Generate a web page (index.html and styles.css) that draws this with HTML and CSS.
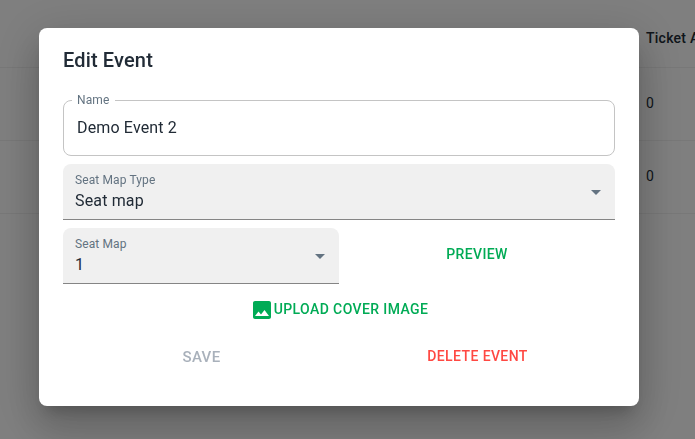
FILE: index.html
```html
<!DOCTYPE html>
<html lang="en">
<head>
<meta charset="utf-8">
<title>Edit Event</title>
<link rel="stylesheet" href="styles.css">
</head>
<body>
<div class="page">
  <div class="row row-head"><span class="cell">Ticket A</span></div>
  <div class="row"><span class="cell">0</span></div>
  <div class="row"><span class="cell">0</span></div>
</div>
<div class="backdrop">
  <div class="dialog" role="dialog">
    <h2 class="title">Edit Event</h2>
    <div class="content">
      <fieldset class="outlined">
        <legend class="legend">Name</legend>
        <div class="value">Demo Event 2</div>
      </fieldset>
      <div class="select">
        <div class="select-text">
          <span class="label">Seat Map Type</span>
          <span class="value">Seat map</span>
        </div>
        <svg class="arrow" viewBox="0 0 24 24"><path d="M7 10l5 5 5-5z"/></svg>
      </div>
      <div class="columns">
        <div class="select">
          <div class="select-text">
            <span class="label">Seat Map</span>
            <span class="value">1</span>
          </div>
          <svg class="arrow" viewBox="0 0 24 24"><path d="M7 10l5 5 5-5z"/></svg>
        </div>
        <button class="button preview">PREVIEW</button>
      </div>
      <button class="button upload">
        <svg class="image-icon" viewBox="0 0 24 24"><path d="M21 19V5c0-1.100-.9-2-2-2H5c-1.100 0-2 .9-2 2v14c0 1.100.9 2 2 2h14c1.100 0 2-.9 2-2zM8.500 13.500l2.500 3.010L14.500 12l4.500 6H5l3.500-4.500z"/></svg>
        <span class="upload-label">UPLOAD COVER IMAGE</span>
      </button>
      <div class="columns actions">
        <button class="button save" disabled>SAVE</button>
        <button class="button delete">DELETE EVENT</button>
      </div>
    </div>
  </div>
</div>
</body>
</html>
```
FILE: styles.css
```css
* { box-sizing: border-box; }

body {
  margin: 0;
  height: 439px;
  overflow: hidden;
  background: #fff;
  color: #212b36;
  font-family: Roboto, "Liberation Sans", sans-serif;
}

.page { padding-top: 9px; }

.row {
  display: flex;
  align-items: center;
  height: 73px;
  padding: 0 0 2px 646px;
  overflow: hidden;
  border-bottom: 1px solid #f1f1f1;
  font-size: 14px;
  letter-spacing: 0.15px;
  white-space: nowrap;
}

.row-head {
  height: 59px;
  padding-bottom: 0;
  font-weight: 500;
  letter-spacing: 0.24px;
}

.backdrop {
  position: fixed;
  inset: 0;
  padding: 28px 56px 33px 39px;
  background: rgba(0, 0, 0, 0.5);
}

.dialog {
  width: 600px;
  height: 378px;
  padding: 16px 24px;
  border-radius: 8px;
  background: #fff;
  box-shadow:
    0 11px 15px -7px rgba(0, 0, 0, 0.2),
    0 24px 38px 3px rgba(0, 0, 0, 0.14),
    0 9px 46px 8px rgba(0, 0, 0, 0.12);
}

.title {
  margin: 0;
  font-size: 20px;
  font-weight: 500;
  line-height: 32px;
  letter-spacing: 0.15px;
}

.content { padding-top: 18px; }

.outlined {
  height: 62px;
  margin: 0 0 8px;
  padding: 0 13px;
  border: 1px solid #c4c4c4;
  border-radius: 8px;
}

.legend {
  margin-left: -5px;
  padding: 0 6px 0 5px;
  color: #637381;
  font-size: 12px;
  line-height: 12px;
  letter-spacing: 0.11px;
}

.outlined .value { margin-top: 10px; }

.value {
  font-size: 16px;
  line-height: 23px;
  letter-spacing: 0.15px;
}

.select {
  display: flex;
  align-items: center;
  justify-content: space-between;
  height: 56px;
  margin-bottom: 8px;
  padding: 0 7px 0 12px;
  border-bottom: 1px solid #858585;
  border-radius: 8px 8px 0 0;
  background: #f0f0f0;
}

.select-text {
  display: flex;
  flex-direction: column;
}

.select .value {
  padding-top: 1px;
  line-height: 22px;
}

.select .value { line-height: 23px; margin-bottom: -1px; }

.label {
  color: #637381;
  font-size: 12px;
  line-height: 16px;
  letter-spacing: 0.11px;
}

.arrow {
  width: 24px;
  height: 24px;
  fill: #637381;
}

.columns {
  display: grid;
  grid-template-columns: 1fr 1fr;
}

.button {
  display: flex;
  align-items: center;
  justify-content: center;
  height: 36px;
  padding: 0 8px;
  border: 0;
  background: none;
  color: #00ab55;
  font-family: inherit;
  font-size: 14px;
  font-weight: 500;
  letter-spacing: 0.4px;
}

.preview { margin-top: 8px; }

.upload {
  width: 100%;
  height: 36px;
}

.upload-label { padding-bottom: 2px; }

.image-icon {
  width: 24px;
  height: 24px;
  fill: currentColor;
}

.actions { margin-top: 11px; }

.save {
  padding-left: 9px;
  color: #a9b1bb;
  font-size: 15px;
}

.delete {
  padding: 0 8px 2px 9px;
  color: #ff4842;
}
```
